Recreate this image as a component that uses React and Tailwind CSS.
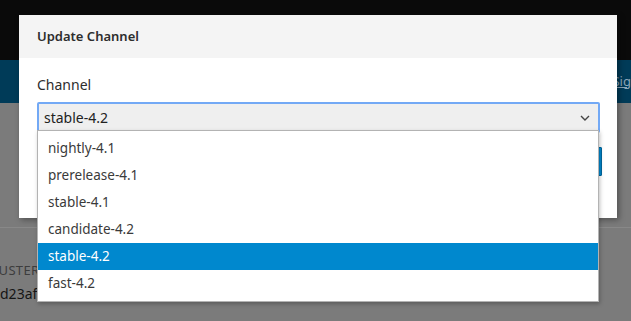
import React from "react";

const options = [
  "nightly-4.1",
  "prerelease-4.1",
  "stable-4.1",
  "candidate-4.2",
  "stable-4.2",
  "fast-4.2",
];

const App = () => {
  const selected = "stable-4.2";
  return (
    <div
      className="relative w-[631px] h-[321px] overflow-hidden bg-[#7b7b7b]"
      style={{ fontFamily: '"Noto Sans", "Liberation Sans", sans-serif' }}
    >
      {/* page behind the backdrop */}
      <div className="flex flex-col h-full">
        <div className="h-[60px] bg-[#0a0a0a]" />
        <div className="h-[43px] bg-[#003b58] flex items-center justify-end">
          <span className="text-[13px] text-[#8ea6b8] underline -mr-[8px]">Sign</span>
        </div>
        <div className="flex-1 flex flex-col bg-[#7b7b7b]">
          <div className="h-[125px] border-b border-[#888]" />
          <div className="pt-[33px] flex flex-col gap-[2px]">
            <span className="text-[13px] tracking-wide text-[#3d3d3d] -ml-[17px]">CLUSTER ID</span>
            <span className="text-[14px] text-[#151515] -ml-[8px]">0d23af</span>
          </div>
        </div>
      </div>

      {/* modal */}
      <div className="absolute left-[19px] top-[15px] w-[598px] h-[203px] bg-white shadow-[2px_2px_6px_rgba(0,0,0,0.35)] flex flex-col">
        <div className="h-[43px] bg-[#f4f4f4] flex items-center px-[18px]">
          <span className="text-[13px] font-semibold text-[#2d2d2d]">Update Channel</span>
        </div>
        <div className="px-[18px] pt-[16px]">
          <div className="text-[14px] text-[#2d2d2d] mb-[7px]">Channel</div>
          <div className="h-[31px] w-[563px] rounded-[2px] border-2 border-[#73a9f5] bg-[#efefef] flex items-center justify-between pl-[5px] pr-[8px]">
            <span className="text-[14px] text-[#222]">{selected}</span>
            <svg width="10" height="6" viewBox="0 0 10 6" fill="none">
              <path d="M1 1l4 4 4-4" stroke="#444" strokeWidth="1.4" />
            </svg>
          </div>
        </div>
        <div className="flex-1 flex justify-end items-start pt-[14px] pr-[15px]">
          <div className="w-[80px] h-[29px] bg-[#0088ce] border border-[#00659c] rounded-[1px]" />
        </div>
      </div>

      {/* open select list */}
      <div className="absolute left-[37px] top-[130px] w-[562px] h-[172px] bg-white border border-[#b3b3b3] shadow-[1px_2px_4px_rgba(0,0,0,0.25)] py-[4px]">
        {options.map((o) => (
          <div
            key={o}
            className={
              o === selected
                ? "h-[27px] flex items-center pl-[10px] text-[13.5px] bg-[#0088ce] text-white"
                : "h-[27px] flex items-center pl-[10px] text-[13.5px] text-[#3a3a3a]"
            }
          >
            {o}
          </div>
        ))}
      </div>
    </div>
  );
};

export default App;
